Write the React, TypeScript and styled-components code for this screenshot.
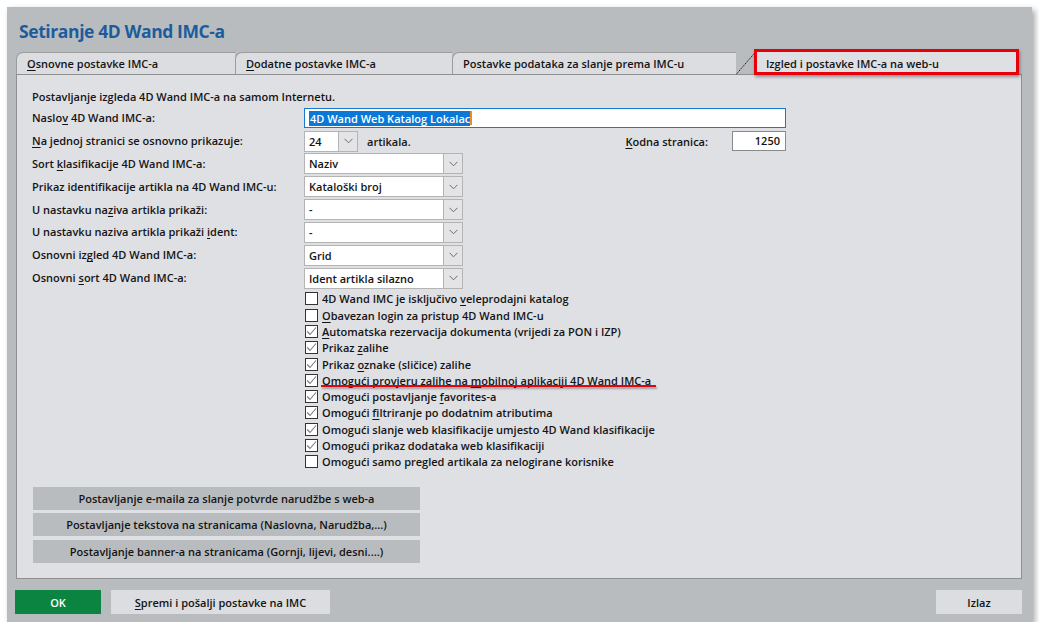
import React from "react";
import styled, { createGlobalStyle } from "styled-components";

const GlobalStyle = createGlobalStyle`
  html, body { margin: 0; padding: 0; background: #ffffff; }
  body { font-family: "Open Sans", "Noto Sans", sans-serif; }
  u { text-decoration-thickness: 1px; text-underline-offset: 2px; }
`;

const Window = styled.div`
  margin: 7px 0 0 7px;
  width: 1025px;
  height: 615px;
  box-sizing: border-box;
  background: #b9bcbf;
  box-shadow: 3px 3px 6px rgba(0, 0, 0, 0.35);
  display: flex;
  flex-direction: column;
  padding: 0 0 0 9px;
  font-size: 11px;
  font-weight: 600;
  color: #141414;
`;

const Title = styled.h1`
  margin: 0;
  padding: 12px 0 0 3px;
  height: 33px;
  box-sizing: border-box;
  font-size: 17.5px;
  font-weight: 700;
  color: #1c5c9c;
  line-height: 24px;
  letter-spacing: -0.4px;
`;

const TabRow = styled.div`
  display: flex;
  align-items: flex-end;
  height: 34px;
  position: relative;
  z-index: 1;
`;

const Tab = styled.div<{ $w: number }>`
  width: ${(p) => p.$w}px;
  height: 22px;
  box-sizing: border-box;
  background: #dcdde1;
  border: 1px solid #9c9c9c;
  border-right: none;
  border-bottom: none;
  border-top-left-radius: 7px;
  padding-left: 10px;
  display: flex;
  align-items: center;
  white-space: nowrap;
`;

const Slant = styled.svg`
  width: 20px;
  height: 24px;
  display: block;
  margin-bottom: -1px;
`;

const ActiveTab = styled.div`
  position: relative;
  width: 261px;
  height: 24px;
  margin-bottom: -1px;
  box-sizing: border-box;
  background: #dfe0e4;
  border-top: 1px solid #555;
  padding-left: 10px;
  display: flex;
  align-items: center;
  white-space: nowrap;
  &::after {
    content: "";
    position: absolute;
    left: -2px;
    top: -3px;
    width: 265px;
    height: 26px;
    box-sizing: border-box;
    border: 3px solid #e8000b;
    box-shadow: 1px 2px 3px rgba(0, 0, 0, 0.35);
  }
`;

const Panel = styled.div`
  width: 1006px;
  height: 509px;
  box-sizing: border-box;
  background: #dfe0e4;
  border: 1px solid #8f8f8f;
  padding: 14px 0 0 15px;
  display: flex;
  flex-direction: column;
`;

const Intro = styled.div`
  height: 16px;
  line-height: 16px;
  margin-bottom: 3px;
`;

const Form = styled.div`
  display: grid;
  grid-template-columns: 272px auto;
  grid-auto-rows: 21px;
  row-gap: 1.85px;
  align-items: center;
`;

const Label = styled.div`
  line-height: 16px;
  white-space: nowrap;
`;

const Field = styled.div`
  display: flex;
  align-items: center;
  height: 21px;
`;

const TextInput = styled.div`
  width: 482px;
  height: 20px;
  box-sizing: border-box;
  background: #fff;
  border: 1px solid #1a78d0;
  display: flex;
  align-items: center;
  padding-left: 4px;
`;

const Selected = styled.span`
  background: #0a78d7;
  color: #fff;
  line-height: 15px;
  padding: 0 0 0 1px;
`;

const Caret = styled.span`
  display: inline-block;
  width: 2px;
  height: 14px;
  background: #f08a24;
`;

const Select = styled.div<{ $w: number }>`
  width: ${(p) => p.$w}px;
  height: 21px;
  box-sizing: border-box;
  background: #fff;
  border: 1px solid #b4b4b4;
  display: flex;
  align-items: center;
  padding-left: 4px;
`;

const SelectValue = styled.div`
  flex: 1;
  white-space: nowrap;
`;

const ArrowBtn = styled.div`
  width: 19px;
  height: 19px;
  box-sizing: border-box;
  background: #e4e4e6;
  border-left: 1px solid #b4b4b4;
  display: flex;
  align-items: center;
  justify-content: center;
`;

const Unit = styled.span`
  margin-left: 9px;
`;

const Spacer = styled.div`
  flex: 1;
`;

const CodeLabel = styled.span`
  margin-right: 24px;
`;

const CodeInput = styled.div`
  width: 54px;
  height: 20px;
  box-sizing: border-box;
  background: #fff;
  border: 1px solid #8a8a8a;
  text-align: right;
  padding-right: 5px;
  line-height: 18px;
`;

const Checks = styled.div`
  margin: 2px 0 0 273px;
  display: flex;
  flex-direction: column;
`;

const CheckRow = styled.div`
  position: relative;
  height: 16.3px;
  display: flex;
  align-items: center;
  white-space: nowrap;
`;

const Box = styled.div`
  width: 13px;
  height: 13px;
  box-sizing: border-box;
  background: #fff;
  border: 1px solid #333;
  margin-right: 4px;
  display: flex;
  align-items: center;
  justify-content: center;
`;

const RedLine = styled.div`
  position: absolute;
  left: 16px;
  top: 13px;
  width: 335px;
  height: 2px;
  background: #e8000b;
  box-shadow: 1px 2px 2px rgba(0, 0, 0, 0.3);
`;

const ActionList = styled.div`
  margin: 17px 0 0 1px;
  display: flex;
  flex-direction: column;
  gap: 3.5px;
  width: 387px;
`;

const ActionBtn = styled.div`
  height: 23px;
  background: #b9bcbf;
  display: flex;
  align-items: center;
  justify-content: center;
  white-space: nowrap;
`;

const Footer = styled.div`
  display: flex;
  align-items: center;
  height: 40px;
  padding-top: 3px;
  margin-left: -1px;
`;

const FootBtn = styled.div<{ $w: number; $green?: boolean }>`
  width: ${(p) => p.$w}px;
  height: 24px;
  background: ${(p) => (p.$green ? "#0b8442" : "#dcdde0")};
  color: ${(p) => (p.$green ? "#ffffff" : "#141414")};
  display: flex;
  align-items: center;
  justify-content: center;
  white-space: nowrap;
  margin-right: 10px;
`;

const FootSpacer = styled.div`
  flex: 1;
`;

const Chevron = () => (
  <svg width="9" height="6" viewBox="0 0 9 6">
    <polyline points="0.5,0.8 4.5,4.8 8.5,0.8" fill="none" stroke="#6a6a6a" strokeWidth="1" />
  </svg>
);

const Tick = () => (
  <svg width="11" height="11" viewBox="0 0 11 11">
    <polyline points="1.2,5.5 4,8.5 10,1.5" fill="none" stroke="#7a7a7a" strokeWidth="1.1" />
  </svg>
);

const Dropdown = ({ w, value }: { w: number; value: string }) => (
  <Select $w={w}>
    <SelectValue>{value}</SelectValue>
    <ArrowBtn>
      <Chevron />
    </ArrowBtn>
  </Select>
);

const checks: { label: React.ReactNode; on: boolean; mark?: boolean }[] = [
  { label: <>4D Wand IMC je isključivo <u>v</u>eleprodajni katalog</>, on: false },
  { label: <><u>O</u>bavezan login za pristup 4D Wand IMC-u</>, on: false },
  { label: <><u>A</u>utomatska rezervacija dokumenta (vrijedi za PON i IZP)</>, on: true },
  { label: <>Prikaz <u>z</u>alihe</>, on: true },
  { label: <>Prikaz <u>o</u>znake (sličice) zalihe</>, on: true },
  { label: <>Omogući provjeru zalihe na <u>m</u>obilnoj aplikaciji 4D Wand IMC-a</>, on: true, mark: true },
  { label: <>Omogući postavljanje <u>f</u>avorites-a</>, on: true },
  { label: <>Omogući <u>f</u>iltriranje po dodatnim atributima</>, on: true },
  { label: <>Omogući slanje web klasifikacije umjesto 4D Wand klasifikacije</>, on: true },
  { label: <>Omogući prikaz dodataka web klasifikaciji</>, on: true },
  { label: <>Omogući samo pregled artikala za nelogirane korisnike</>, on: false },
];

export default function App() {
  return (
    <>
      <GlobalStyle />
      <Window>
        <Title>Setiranje 4D Wand IMC-a</Title>
        <TabRow>
          <Tab $w={219}><span><u>O</u>snovne postavke IMC-a</span></Tab>
          <Tab $w={217}><span><u>D</u>odatne postavke IMC-a</span></Tab>
          <Tab $w={284}><span>Postavke podataka za slanje prema IMC-u</span></Tab>
          <Slant viewBox="0 0 20 24">
            <line x1="0" y1="23.5" x2="20" y2="0.5" stroke="#222" strokeWidth="1" strokeDasharray="1.5 0.8" />
          </Slant>
          <ActiveTab>Izgled i postavke IMC-a na web-u</ActiveTab>
        </TabRow>
        <Panel>
          <Intro>Postavljanje izgleda 4D Wand IMC-a na samom Internetu.</Intro>
          <Form>
            <Label>Naslo<u>v</u> 4D Wand IMC-a:</Label>
            <Field>
              <TextInput>
                <Selected>4D Wand Web Katalog Lokalac</Selected>
                <Caret />
              </TextInput>
            </Field>

            <Label><u>N</u>a jednoj stranici se osnovno prikazuje:</Label>
            <Field style={{ width: 482 }}>
              <Dropdown w={54} value="24" />
              <Unit>artikala.</Unit>
              <Spacer />
              <CodeLabel><u>K</u>odna stranica:</CodeLabel>
              <CodeInput>1250</CodeInput>
            </Field>

            <Label>Sort <u>k</u>lasifikacije 4D Wand IMC-a:</Label>
            <Field><Dropdown w={159} value="Naziv" /></Field>

            <Label>Prikaz identifikacije artikla na 4D Wand IMC-u:</Label>
            <Field><Dropdown w={159} value="Kataloški broj" /></Field>

            <Label>U nastavku na<u>z</u>iva artikla prikaži:</Label>
            <Field><Dropdown w={159} value="-" /></Field>

            <Label>U nastavku naziva artikla prikaži <u>i</u>dent:</Label>
            <Field><Dropdown w={159} value="-" /></Field>

            <Label>Osnovni iz<u>g</u>led 4D Wand IMC-a:</Label>
            <Field><Dropdown w={159} value="Grid" /></Field>

            <Label>Osnovni <u>s</u>ort 4D Wand IMC-a:</Label>
            <Field><Dropdown w={159} value="Ident artikla silazno" /></Field>
          </Form>

          <Checks>
            {checks.map((c, i) => (
              <CheckRow key={i}>
                <Box>{c.on && <Tick />}</Box>
                <span>{c.label}</span>
                {c.mark && <RedLine />}
              </CheckRow>
            ))}
          </Checks>

          <ActionList>
            <ActionBtn>Postavljanje e-maila za slanje potvrde narudžbe s web-a</ActionBtn>
            <ActionBtn>Postavljanje tekstova na stranicama (Naslovna, Narudžba,...)</ActionBtn>
            <ActionBtn>Postavljanje banner-a na stranicama (Gornji, lijevi, desni....)</ActionBtn>
          </ActionList>
        </Panel>
        <Footer>
          <FootBtn $w={86} $green>OK</FootBtn>
          <FootBtn $w={219}><span><u>S</u>premi i pošalji postavke na IMC</span></FootBtn>
          <FootSpacer />
          <FootBtn $w={86}>Izlaz</FootBtn>
        </Footer>
      </Window>
    </>
  );
}
